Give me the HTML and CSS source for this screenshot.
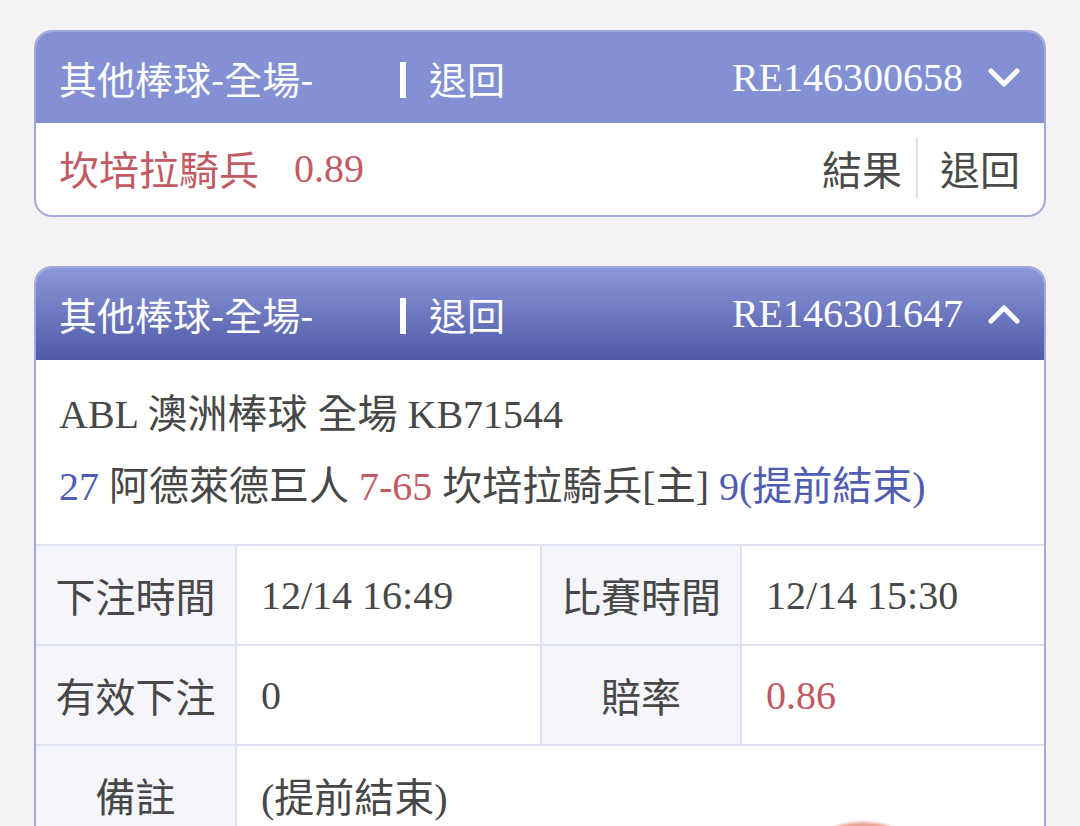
FILE: index.html
```html
<!DOCTYPE html>
<html lang="zh-Hant">
<head>
<meta charset="utf-8">
<link rel="stylesheet" href="styles.css">
</head>
<body>
<div class="page">
  <div class="card">
    <div class="head flat">
      <div class="title">其他棒球-全場-</div>
      <div class="bar"></div>
      <div class="status">退回</div>
      <div class="order">RE146300658</div>
      <svg class="chev" width="32" height="20" viewBox="0 0 32 20"><polyline points="3,3 16,16 29,3" fill="none" stroke="#fff" stroke-width="5" stroke-linecap="round" stroke-linejoin="round"/></svg>
    </div>
    <div class="summary">
      <span class="red team">坎培拉騎兵</span>
      <span class="red odds">0.89</span>
      <span class="actions">
        <span class="act">結果</span>
        <span class="divider"></span>
        <span class="act">退回</span>
      </span>
    </div>
  </div>

  <div class="card">
    <div class="head grad">
      <div class="title">其他棒球-全場-</div>
      <div class="bar"></div>
      <div class="status">退回</div>
      <div class="order">RE146301647</div>
      <svg class="chev" width="32" height="20" viewBox="0 0 32 20"><polyline points="3,17 16,4 29,17" fill="none" stroke="#fff" stroke-width="5" stroke-linecap="round" stroke-linejoin="round"/></svg>
    </div>
    <div class="info">
      <div class="line">ABL 澳洲棒球 全場 KB71544</div>
      <div class="line"><span class="blue">27</span> 阿德萊德巨人 <span class="red">7-65</span> 坎培拉騎兵[主] <span class="blue">9(提前結束)</span></div>
    </div>
    <div class="table">
      <div class="lab">下注時間</div>
      <div class="val">12/14 16:49</div>
      <div class="lab">比賽時間</div>
      <div class="val">12/14 15:30</div>
      <div class="lab">有效下注</div>
      <div class="val">0</div>
      <div class="lab">賠率</div>
      <div class="val red">0.86</div>
      <div class="lab">備註</div>
      <div class="val wide">(提前結束)<span class="stamp"></span></div>
    </div>
  </div>
</div>
</body>
</html>
```

FILE: styles.css
```css
* { box-sizing: border-box; }
html, body { margin: 0; padding: 0; }
body {
  background: #f3f3f5;
  width: 1080px;
  height: 826px;
  overflow: hidden;
  font-family: "Liberation Serif", "Noto Sans CJK TC", serif;
  color: #474747;
}
.page {
  padding: 30px 34px 0 34px;
  display: flex;
  flex-direction: column;
  gap: 49px;
}
.card {
  border: 2px solid #a3aad9;
  border-radius: 18px;
  overflow: hidden;
  background: #fff;
}
.head {
  height: 91px;
  display: flex;
  align-items: center;
  padding: 0 24px 0 23px;
  color: #fff;
}
.head.flat { background: #8390d3; }
.head.grad {
  height: 92px;
  background: linear-gradient(180deg, #8c98d9 0%, #6d78c0 50%, #4f59a7 100%);
}
.title {
  width: 341px;
  font-family: "Noto Sans CJK TC", sans-serif;
  font-size: 38px;
  line-height: 44px;
}
.bar {
  width: 6px;
  height: 36px;
  background: #fff;
  margin-top: 4px;
}
.status {
  margin-left: 23px;
  font-family: "Noto Sans CJK TC", sans-serif;
  font-size: 38px;
  line-height: 44px;
}
.order {
  margin-left: auto;
  font-size: 40px;
  line-height: 44px;
}
.chev { margin-left: 25px; }
.summary {
  height: 92px;
  display: flex;
  align-items: center;
  padding: 0 24px 2px 23px;
  font-size: 40px;
}
.team { font-family: "Noto Sans CJK TC", sans-serif; }
.odds { margin-left: 35px; }
.red { color: #c25a64; }
.blue { color: #4f5cb3; }
.actions {
  margin-left: auto;
  display: flex;
  align-items: center;
}
.act {
  font-family: "Noto Sans CJK TC", sans-serif;
  font-size: 40px;
  color: #4a4a4a;
}
.divider {
  width: 2px;
  height: 62px;
  background: #dde0f0;
  margin: 0 22px 0 14px;
}
.info {
  padding: 19px 23px 21px 23px;
  font-size: 40px;
  line-height: 72px;
}
.table {
  display: grid;
  grid-template-columns: 199px 303px 198px 302px;
  grid-auto-rows: 98px;
  gap: 2px;
  background: #dfe1f1;
  border-top: 2px solid #dfe1f1;
  font-size: 40px;
}
.lab {
  background: #f5f6fb;
  display: flex;
  align-items: center;
  justify-content: center;
  font-family: "Noto Sans CJK TC", sans-serif;
  font-size: 40px;
}
.val {
  background: #fff;
  display: flex;
  align-items: center;
  padding-left: 24px;
}
.wide {
  grid-column: span 3;
  position: relative;
}
.stamp {
  position: absolute;
  left: 584px;
  top: 76px;
  width: 84px;
  height: 40px;
  border-radius: 50%;
  background: rgba(230, 140, 120, 0.8);
  filter: blur(1.5px);
}
```
